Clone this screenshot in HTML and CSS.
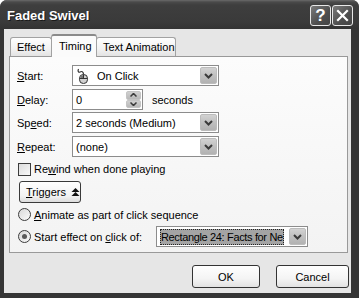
FILE: index.html
```html
<!DOCTYPE html>
<html>
<head>
<meta charset="utf-8">
<link rel="stylesheet" href="styles.css">
</head>
<body>
<div class="window">
  <div class="titlebar">
    <span class="title">Faded Swivel</span>
    <div class="tbtns">
      <div class="tbtn help">?</div>
      <div class="tbtn close">
        <svg width="13" height="13" viewBox="0 0 13 13"><path d="M2 2L11 11M11 2L2 11" stroke="#fff" stroke-width="2.2" stroke-linecap="square"/></svg>
      </div>
    </div>
  </div>
  <div class="client">
    <div class="tabs">
      <div class="tab t-effect">Effect</div>
      <div class="tab sel t-timing">Timing</div>
      <div class="tab t-text">Text Animation</div>
    </div>
    <div class="panel">
      <div class="row r-start">
        <span class="lbl"><u>S</u>tart:</span>
        <div class="combo">
          <span class="mouse">
            <svg width="12" height="16" viewBox="0 0 12 16">
              <path d="M6.5 6.5 C6.5 3.5 4.5 3 3 4 C1.5 5 0.5 3 1.5 1" fill="none" stroke="#333" stroke-width="1.2"/>
              <rect x="2.5" y="6.5" width="8" height="9" rx="3.8" fill="#d0d0d0" stroke="#333" stroke-width="1"/>
              <path d="M2.5 10.5H10.5M6.5 6.5V10.5" stroke="#333" stroke-width="1"/>
              <rect x="3.5" y="7.5" width="2.5" height="2.5" fill="#777"/>
            </svg>
          </span>
          <span class="ctext">On Click</span>
          <span class="dd"><svg width="9" height="6" viewBox="0 0 9 6"><path d="M1 1L4.5 4.5L8 1" fill="none" stroke="#3a3a3a" stroke-width="2"/></svg></span>
        </div>
      </div>
      <div class="row r-delay">
        <span class="lbl"><u>D</u>elay:</span>
        <div class="spin">
          <span class="ctext">0</span>
          <span class="spinbtn">
            <span class="sb"><svg width="7" height="4" viewBox="0 0 7 4"><path d="M0.5 3.5L3.5 0.5L6.5 3.5" fill="none" stroke="#3a3a3a" stroke-width="1.5"/></svg></span>
            <span class="sb"><svg width="7" height="4" viewBox="0 0 7 4"><path d="M0.5 0.5L3.5 3.5L6.5 0.5" fill="none" stroke="#3a3a3a" stroke-width="1.5"/></svg></span>
          </span>
        </div>
        <span class="unit">seconds</span>
      </div>
      <div class="row r-speed">
        <span class="lbl">Sp<u>e</u>ed:</span>
        <div class="combo">
          <span class="ctext">2 seconds (Medium)</span>
          <span class="dd"><svg width="9" height="6" viewBox="0 0 9 6"><path d="M1 1L4.5 4.5L8 1" fill="none" stroke="#3a3a3a" stroke-width="2"/></svg></span>
        </div>
      </div>
      <div class="row r-repeat">
        <span class="lbl"><u>R</u>epeat:</span>
        <div class="combo">
          <span class="ctext">(none)</span>
          <span class="dd"><svg width="9" height="6" viewBox="0 0 9 6"><path d="M1 1L4.5 4.5L8 1" fill="none" stroke="#3a3a3a" stroke-width="2"/></svg></span>
        </div>
      </div>
      <div class="row r-check">
        <span class="checkbox"></span>
        <span class="opt">Re<u>w</u>ind when done playing</span>
      </div>
      <div class="row r-trig">
        <div class="trigbtn"><span><u>T</u>riggers</span>
          <svg width="9" height="9" viewBox="0 0 9 9"><path d="M0.5 4L4.5 0L8.5 4Z M0.5 8L4.5 4L8.5 8Z" fill="#111"/></svg>
        </div>
      </div>
      <div class="row r-radio1">
        <span class="radio"></span>
        <span class="opt"><u>A</u>nimate as part of click sequence</span>
      </div>
      <div class="row r-radio2">
        <span class="radio on"><span class="dot"></span></span>
        <span class="opt opt2">Start effect on <u>c</u>lick of:</span>
        <div class="combo combo2">
          <span class="ctext"><span class="hl">Rectangle 24: Facts for Ne</span></span>
          <span class="dd"><svg width="9" height="6" viewBox="0 0 9 6"><path d="M1 1L4.5 4.5L8 1" fill="none" stroke="#3a3a3a" stroke-width="2"/></svg></span>
        </div>
      </div>
    </div>
    <div class="buttons">
      <div class="btn ok">OK</div>
      <div class="btn cancel">Cancel</div>
    </div>
  </div>
</div>
</body>
</html>
```

FILE: styles.css
```css
* { box-sizing: border-box; }
html, body { margin: 0; padding: 0; background: #fff; }
body { font-family: "Liberation Sans", Arial, sans-serif; font-size: 11px; color: #000; }

.window {
  width: 359px; height: 298px;
  background: #353535;
  border-radius: 7px 7px 0 0;
  display: flex; flex-direction: column;
  overflow: hidden;
}
.titlebar {
  height: 29px; flex: none;
  display: flex; align-items: center;
  padding: 0 7px 0 7px;
  background: linear-gradient(#6a6a6a 0, #4a4a4a 2px, #3e3e3e 5px, #3a3a3a 22px, #333 29px);
}
.title {
  color: #fff; font-weight: bold; font-size: 13px;
  text-shadow: 1px 1px 0 #1a1a1a;
  flex: 1; padding-top: 1px;
}
.tbtns { display: flex; gap: 1px; margin-top: 2px; }
.tbtn {
  width: 21px; height: 21px;
  border: 1px solid #e8e8e8; border-radius: 3px;
  background: linear-gradient(135deg, #7a7a7a, #4e4e4e 60%, #444);
  color: #fff; font-weight: bold; font-size: 17px;
  display: flex; align-items: center; justify-content: center;
}
.close { margin-right: -1px; }

.client {
  flex: 1;
  margin: 0 8px 5px 4px;
  background: #e6e6e6;
  padding: 5px 0 0 5px;
  display: flex; flex-direction: column;
}
.tabs { display: flex; height: 23px; padding-left: 1px; align-items: flex-end; position: relative; z-index: 1; }
.tab {
  height: 19px;
  border: 1px solid #a2a2a2; border-bottom: none;
  border-radius: 3px 3px 0 0;
  background: linear-gradient(#fefefe, #f2f2f2 60%, #e3e3e3);
  padding: 3px 0 0 6px;
  margin-bottom: 1px;
}
.t-effect { width: 42px; }
.t-timing { width: 46px; margin-left: -1px; }
.t-text { width: 80px; margin-left: -1px; }
.tab.sel {
  height: 23px; margin-bottom: 0;
  border-top: 2px solid #8a8a8a;
  background: #fbfbfb;
  padding: 4px 0 0 7px;
  position: relative; z-index: 2;
}

.panel {
  width: 339px; height: 197px;
  margin-top: -1px;
  border: 1px solid #999;
  background: linear-gradient(#fcfcfc, #f3f3f3);
  padding: 8px 0 0 7px;
}
.row { display: flex; align-items: center; }
.lbl { width: 55px; }
.r-start, .r-delay, .r-speed, .r-repeat { height: 21px; }
.r-delay { margin-top: 3px; }
.r-speed { margin-top: 2px; }
.r-repeat { margin-top: 3px; }
.r-check { margin-top: 5px; height: 14px; padding-left: 1px; }
.r-trig { margin-top: 5px; height: 22px; padding-left: 2px; }
.r-radio1 { margin-top: 5px; height: 13px; padding-left: 1px; }
.r-radio2 { margin-top: 5px; height: 21px; padding-left: 1px; }

.combo {
  width: 147px; height: 21px;
  border: 1px solid #8c8c8c; background: #fff;
  display: flex; align-items: stretch; padding: 1px;
}
.ctext { flex: 1; display: flex; align-items: center; padding-left: 2px; white-space: nowrap; overflow: hidden; }
.mouse { display: flex; align-items: center; padding-left: 3px; padding-right: 6px; }
.dd {
  width: 17px; flex: none;
  border-radius: 2px;
  background: linear-gradient(#d2d2d2, #c0c0c0 50%, #b2b2b2);
  border: 1px solid #bcbcbc;
  display: flex; align-items: center; justify-content: center;
}

.spin {
  width: 71px; height: 21px;
  border: 1px solid #8c8c8c; background: #fff;
  display: flex; align-items: stretch; padding: 1px;
}
.spinbtn { width: 15px; display: flex; flex-direction: column; }
.sb {
  flex: 1; border-radius: 2px;
  background: linear-gradient(#d0d0d0, #b8b8b8);
  border: 1px solid #c4c4c4;
  display: flex; align-items: center; justify-content: center;
}
.unit { margin-left: 9px; }

.checkbox {
  width: 13px; height: 13px;
  border: 1px solid #3c3c3c;
  background: linear-gradient(135deg, #dcdcdc, #f8f8f8);
  margin-right: 3px;
}
.opt { white-space: nowrap; }
.trigbtn {
  width: 62px; height: 22px;
  border: 1px solid #3a3a3a; border-radius: 3px;
  background: linear-gradient(#fff, #f2f2f2 70%, #dcdcdc);
  display: flex; align-items: center; gap: 5px;
  padding-left: 6px;
}
.radio {
  width: 13px; height: 13px; border-radius: 50%;
  border: 1px solid #3c3c3c;
  background: linear-gradient(135deg, #d8d8d8, #fafafa);
  margin-right: 3px;
  display: flex; align-items: center; justify-content: center;
}
.dot { width: 5px; height: 5px; border-radius: 50%; background: #5a5a5a; }
.opt2 { width: 122px; }
.combo2 { width: 152px; }
.hl { background: #a4a4a4; outline: 1px dotted #222; outline-offset: -1px; padding: 2px 1px; letter-spacing: -0.35px; }

.buttons {
  display: flex; justify-content: flex-end; gap: 16px;
  margin-top: 12px; padding-right: 2px;
}
.btn {
  height: 23px;
  border: 1px solid #333; border-radius: 3px;
  background: linear-gradient(#fefefe, #f4f4f4 60%, #e2e2e2);
  display: flex; align-items: center; justify-content: center;
}
.ok { width: 68px; }
.cancel { width: 73px; }
```
